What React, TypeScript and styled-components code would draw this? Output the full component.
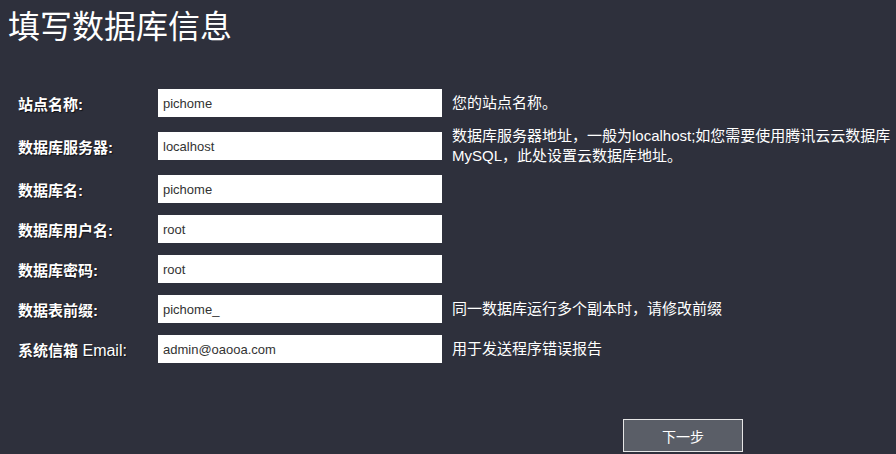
import styled, { createGlobalStyle } from "styled-components";

const fields = [
  { label: "站点名称:", value: "pichome", desc: "您的站点名称。" },
  {
    label: "数据库服务器:",
    value: "localhost",
    desc: "数据库服务器地址，一般为localhost;如您需要使用腾讯云云数据库MySQL，此处设置云数据库地址。",
  },
  { label: "数据库名:", value: "pichome", desc: "" },
  { label: "数据库用户名:", value: "root", desc: "" },
  { label: "数据库密码:", value: "root", desc: "" },
  { label: "数据表前缀:", value: "pichome_", desc: "同一数据库运行多个副本时，请修改前缀" },
  { label: "系统信箱", latin: " Email:", value: "admin@oaooa.com", desc: "用于发送程序错误报告" },
];

function App() {
  return (
    <>
      <GlobalStyle />
      <Page>
        <Title>填写数据库信息</Title>
        <Form>
          {fields.map((f) => (
            <Row key={f.label}>
              <Label>
                {f.label}
                {f.latin && <LatinPart>{f.latin}</LatinPart>}
              </Label>
              <Input type="text" defaultValue={f.value} />
              <Desc>{f.desc}</Desc>
            </Row>
          ))}
        </Form>
        <Footer>
          <NextBtn type="button">下一步</NextBtn>
        </Footer>
      </Page>
    </>
  );
}

export default App;

const GlobalStyle = createGlobalStyle`
  html, body {
    margin: 0;
    background: #2e303c;
  }
  body {
    font-family: "Liberation Sans", "Noto Sans CJK SC", sans-serif;
    color: #fff;
  }
`;

const Page = styled.div`
  width: 896px;
  height: 454px;
  overflow: hidden;
`;

const Title = styled.h1`
  margin: 0;
  padding: 7px 0 0 8px;
  font-size: 32px;
  line-height: 40px;
  font-weight: 400;
  color: #fff;
`;

const Form = styled.div`
  margin-top: 36px;
  display: flex;
  flex-direction: column;
`;

const Row = styled.div`
  display: grid;
  grid-template-columns: 130px 284px 1fr;
  column-gap: 10px;
  align-items: center;
  box-sizing: border-box;
  min-height: 40px;
  padding: 3px 0 3px 18px;
`;

const Label = styled.label`
  font-size: 15px;
  font-weight: 700;
  color: #fff;
  text-shadow: 1px 1px 1px rgba(0, 0, 0, 0.6);
  white-space: nowrap;
`;

const LatinPart = styled.span`
  font-weight: 400;
  font-size: 16px;
`;

const Input = styled.input`
  box-sizing: border-box;
  width: 284px;
  height: 28px;
  border: none;
  outline: none;
  padding: 0 5px;
  background: #fff;
  color: #333;
  font-family: "Liberation Sans", "Noto Sans CJK SC", sans-serif;
  font-size: 13px;
`;

const Desc = styled.div`
  font-size: 15px;
  line-height: 20px;
  color: #fff;
`;

const Footer = styled.div`
  display: flex;
  justify-content: flex-end;
  margin-top: 50px;
  padding-right: 153px;
`;

const NextBtn = styled.button`
  width: 120px;
  height: 33px;
  background: #5a5e67;
  border: 1px solid #e6e6e6;
  color: #fff;
  font-family: "Liberation Sans", "Noto Sans CJK SC", sans-serif;
  font-size: 14px;
  cursor: pointer;
`;
